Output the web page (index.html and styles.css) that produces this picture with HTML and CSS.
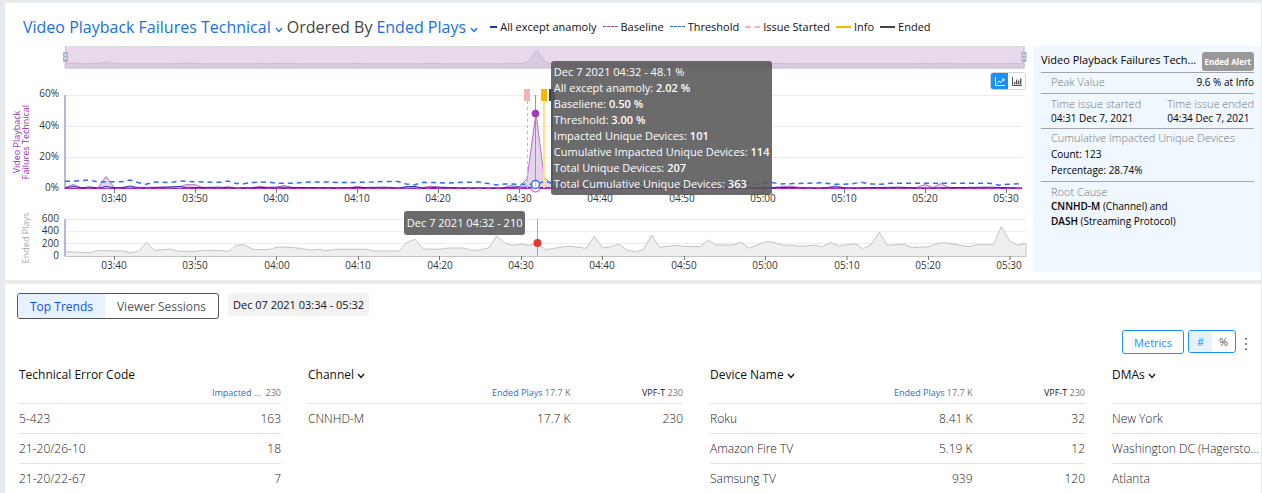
FILE: index.html
```
<!DOCTYPE html>
<html lang="en">
<head>
    <meta charset="UTF-8">
    <meta name="viewport" content="width=device-width, initial-scale=1.0">
    <title>Video Playback Failures Technical</title>
    <link rel="stylesheet" href="styles.css">
</head>
<body>
    <section class="card">
        <header class="card-header">
            <h1 class="title">
                <button class="title-select">Video Playback Failures Technical <svg class="chevron" viewBox="0 0 8 6"><path d="M1 1l3 3.5L7 1"/></svg></button>
                <span>Ordered By</span>
                <button class="title-select">Ended Plays <svg class="chevron" viewBox="0 0 8 6"><path d="M1 1l3 3.5L7 1"/></svg></button>
            </h1>
            <ul class="legend">
                <li><i class="swatch swatch-all"></i>All except anamoly</li>
                <li><i class="swatch swatch-baseline"></i>Baseline</li>
                <li><i class="swatch swatch-threshold"></i>Threshold</li>
                <li><i class="swatch swatch-started"></i>Issue Started</li>
                <li><i class="swatch swatch-info"></i>Info</li>
                <li><i class="swatch swatch-ended"></i>Ended</li>
            </ul>
        </header>

        <div class="overview">
            <div class="charts">
                <svg class="chart-svg" viewBox="5 46 1028 226">
                    <!-- range slider -->
                    <rect x="65" y="46" width="960" height="22" fill="#e8daec"/>
                    <path class="range-area" d="M65 63.5L75 63 82 63.7 99 63.5 105 62 112 63.2 120 63.8 170 63.8 182 63.2 196 63.2 203 63.8 254 63.8 260 63.3 267 63.8 286 63.2 300 63.8 350 63.8 357 63.3 364 63.8 420 63.8 432 63.3 444 63.8 500 63.8 513 63.2 520 63.7 528 62 536.500 50 545 62 552 63.7 700 63.8 780 63.5 800 63.8 912 63.8 926 63.2 934 63.8 944 63.2 952 63.8 1024 63.5V68H65Z"/>
                    <path d="M65 46.500H1024M65 68.500H1024" stroke="#dcdce0"/>
                    <path d="M65.500 46V68M1024 46V68" stroke="#b9c5d8"/>
                    <path d="M63 52h5v10h-5zM1021.500 52h5v10h-5z" fill="#a7b7cf"/>
                    <path d="M64 55h3M64 58.500h3M1022.500 55h3M1022.500 58.500h3" stroke="#eef2f8"/>

                    <!-- failures chart -->
                    <path class="gridline" d="M66 95.500H1022M66 126.500H1022M66 157.500H1022"/>
                    <path d="M65 95V189" stroke="#b0bdd6" stroke-width="2"/>
                    <g class="axis-label" text-anchor="end">
                        <text x="59" y="97">60%</text>
                        <text x="59" y="129">40%</text>
                        <text x="59" y="160">20%</text>
                        <text x="59" y="191">0%</text>
                    </g>
                    <path class="failures" d="M65 187.500L73 184.500 81 187.500 98 187.500 106 176.500 114 187.500 178 187 186 184.700 195 184.700 203 187.700 222 187.700 228 186.700 236 187.700 252 187.700 260 186.200 268 187.700 276 187.500 284 185.500 293 187.700 349 187.700 357 186.300 365 187.700 422 187.700 431 186 441 187.500 503 187.700 511 185.500 519 187 527 179 536 113 544 177 553 186 562 187.700 770 187.700 790 186 800 187.700 827 187.700 835 186 844 187.700 917 187.500 925 184.500 933 187.500 941 183.500 949 187.500 1022 188V188.500H65Z"/>
                    <path d="M65 188.500H1022" stroke="#8b25b5"/>
                    <path d="M65 188L73 186.500 81 187.700 90 187 98 188 106 186.500 114 187.700 122 187.700 130 186 138 187.700 146 188 170 187 179 186.500 187 187.700 220 187.200 236 188 276 187.200 300 187.500 340 187.800 385 187.200 398 188 406 186.700 415 186.500 423 188 440 187.200 460 188 500 188 519 187 536 187.500 560 188 700 188 710 187 730 188 790 187.500 820 188 835 187 850 188 900 187.200 920 188 960 187.500 990 187.200 1022 188" fill="none" stroke="#14389d"/>
                    <path d="M66 188.500H1022" stroke="#d42ee0" stroke-dasharray="5 5"/>
                    <path d="M65 181.300L74 181.200 89 180 98 182 106 181.700 122 181.700 130 180 138 182.500 146 184.300 154 182 171 182.500 179 181 195 181.700 219 182.300 228 181 236 183.500 244 183.700 252 182.500 268 182 276 183.300 293 183.200 309 182 325 182 341 182.500 365 182.300 382 181.500 398 181.500 406 184 415 184.800 423 182.300 440 182.700 448 183 464 182.300 480 182 488 183.500 496 185 504 184 520 184.200 536 184.200 544 181.500 553 183 600 184 660 183 700 182.500 745 182.500 756 184.300 770 182.200 780 184 822 182.800 835 184.300 850 184 861 182.300 871 184 881 184.300 890 183.300 990 183.300 999 185.200 1008 184.300 1022 183.700" fill="none" stroke="#2f6bff" stroke-width="1.500" stroke-dasharray="5 4"/>
                    <path class="tick" d="M114.500 189v4M195.500 189v4M276.500 189v4M357.500 189v4M438.500 189v4M519.500 189v4M600.500 189v4M682 189v4M763 189v4M844.500 189v4M925.500 189v4M1006.500 189v4"/>
                    <g class="axis-label" text-anchor="middle">
                        <text x="114" y="202">03:40</text>
                        <text x="195" y="202">03:50</text>
                        <text x="276" y="202">04:00</text>
                        <text x="357" y="202">04:10</text>
                        <text x="438" y="202">04:20</text>
                        <text x="519" y="202">04:30</text>
                        <text x="600" y="202">04:40</text>
                        <text x="682" y="202">04:50</text>
                        <text x="763" y="202">05:00</text>
                        <text x="844" y="202">05:10</text>
                        <text x="925" y="202">05:20</text>
                        <text x="1006" y="202">05:30</text>
                    </g>
                    <path d="M527.500 101V188" stroke="#eda5b5" stroke-dasharray="3 3"/>
                    <path d="M544 101V188" stroke="#ffe08a" stroke-width="2"/>
                    <path d="M552 101V188" stroke="#777" stroke-width="2"/>
                    <rect x="524" y="89" width="6" height="12" fill="#f2b1bb"/>
                    <rect x="541" y="89" width="6" height="12" fill="#ffb400"/>
                    <rect x="549" y="89" width="6" height="12" fill="#444"/>
                    <path d="M535.500 95V188" stroke="#999"/>
                    <circle cx="535.500" cy="113.500" r="3.800" fill="#a138b5"/>
                    <circle cx="535.500" cy="188" r="4" fill="#fff" stroke="#e04af0" stroke-width="1.200"/>
                    <circle cx="535.500" cy="184.500" r="4" fill="#fff" stroke="#2f6bff" stroke-width="1.400"/>
                    <path d="M535.500 182V187" stroke="#b5c4e8"/>
                    <g class="axis-title" text-anchor="middle">
                        <text transform="translate(20 142) rotate(-90)" fill="#9c2fb0">Video Playback</text>
                        <text transform="translate(29 142) rotate(-90)" fill="#9c2fb0">Failures Technical</text>
                        <text transform="translate(29 238) rotate(-90)" fill="#a8a8a8">Ended Plays</text>
                    </g>

                    <!-- ended plays chart -->
                    <path class="gridline" d="M66 219.500H1026M66 231.500H1026M66 243.500H1026"/>
                    <path class="plays" d="M65 251.700L90 252.700 98 250.500 123 251 130.500 252.700 138.500 251.300 146.500 242.700 154.500 250.300 171 249 178.500 251.300 196 251.300 203.500 250.300 220 250.500 228.500 251.300 236.500 245.300 244.500 244.700 252.500 249.300 268.500 249.700 276.500 247.300 285 247 300 248.300 309.500 250 318.500 249.300 326 250.700 335 249.300 366.500 249.300 374 251 399 251 406.500 242.700 415 239.300 423.500 249 440 249.300 448 248 464 248 471.500 250.300 480 250 489 247.700 496.700 236 504.500 242.700 511.700 245.300 520.700 244.300 530 245.300 537.300 243 545.700 249.700 561.700 247 570 246.300 586 248.300 594.300 236.300 602.700 248 610.700 246.700 619 244 627.300 250.300 635.300 251.700 643.300 249.700 651.700 235 659.300 247.300 676 245.300 683.300 246.300 700 246.700 708.300 240 716 245 732.300 245 741 242.300 749 248.300 757.700 244.700 765.700 241.700 772.300 242 781.700 245 793 245.300 799.300 246.300 815 245.300 822.300 246.700 830.700 242.300 838.700 246 855 243.700 863.300 248.700 871.300 244.700 879.300 232 887.300 245.300 904 244.300 912.300 247.700 928.300 246.700 936.700 243.700 944.300 242.700 969 246.700 976.700 244.700 993.300 244.700 1001.300 226.700 1009.700 241 1017.700 245.300 1026 243.300V256.500H65Z"/>
                    <path d="M65 219V256" stroke="#b0bdd6" stroke-width="2"/>
                    <g class="axis-label" text-anchor="end">
                        <text x="59" y="222">600</text>
                        <text x="59" y="234">400</text>
                        <text x="59" y="247">200</text>
                        <text x="59" y="259">0</text>
                    </g>
                    <path class="tick" d="M114.500 256v4M195.500 256v4M276.500 256v4M358.500 256v4M439.500 256v4M521.500 256v4M602.500 256v4M684.500 256v4M765.500 256v4M847 256v4M928.500 256v4M1010 256v4"/>
                    <g class="axis-label" text-anchor="middle">
                        <text x="114" y="269">03:40</text>
                        <text x="195" y="269">03:50</text>
                        <text x="277" y="269">04:00</text>
                        <text x="358" y="269">04:10</text>
                        <text x="440" y="269">04:20</text>
                        <text x="521" y="269">04:30</text>
                        <text x="602" y="269">04:40</text>
                        <text x="684" y="269">04:50</text>
                        <text x="765" y="269">05:00</text>
                        <text x="847" y="269">05:10</text>
                        <text x="928" y="269">05:20</text>
                        <text x="1009" y="269">05:30</text>
                    </g>
                    <path d="M537.500 219V256" stroke="#aaa"/>
                    <circle cx="537.500" cy="243" r="4" fill="#dc3a34"/>
                </svg>

                <div class="tooltip tooltip-failures">
                    <p>Dec 7 2021 04:32 - 48.1 %</p>
                    <p>All except anamoly: <b>2.02 %</b></p>
                    <p>Baseliene: <b>0.50 %</b></p>
                    <p>Threshold: <b>3.00 %</b></p>
                    <p>Impacted Unique Devices: <b>101</b></p>
                    <p>Cumulative Impacted Unique Devices: <b>114</b></p>
                    <p>Total Unique Devices: <b>207</b></p>
                    <p>Total Cumulative Unique Devices: <b>363</b></p>
                </div>
                <div class="tooltip tooltip-plays">Dec 7 2021 04:32 - 210</div>

                <div class="chart-type">
                    <button class="active" aria-label="Line chart"><svg viewBox="0 0 10 9"><path d="M.5 0v8.500H10M2 6.500l2-2.500 2 1.500L9 2M7 2h2v2"/></svg></button>
                    <button aria-label="Bar chart"><svg viewBox="0 0 10 9"><path d="M.5 0v8.500H10"/><path d="M2.700 7.500V5M4.700 7.500V2.500M6.700 7.500V3.800M8.700 7.500V1.500" stroke-width="1.400"/></svg></button>
                </div>
            </div>

            <aside class="alert">
                <div class="alert-head">
                    <h2>Video Playback Failures Tech...</h2>
                    <span class="badge">Ended Alert</span>
                </div>
                <div class="alert-row alert-split alert-loose">
                    <span class="label">Peak Value</span>
                    <span>9.6 % at Info</span>
                </div>
                <div class="alert-row alert-split">
                    <div><p class="label">Time issue started</p><p>04:31 Dec 7, 2021</p></div>
                    <div><p class="label">Time issue ended</p><p>04:34 Dec 7, 2021</p></div>
                </div>
                <div class="alert-row alert-loose">
                    <p class="label">Cumulative Impacted Unique Devices</p>
                    <p>Count: 123</p>
                    <p>Percentage: 28.74%</p>
                </div>
                <div class="alert-row">
                    <p class="label">Root Cause</p>
                    <p><b>CNNHD-M</b> (Channel) and</p>
                    <p><b>DASH</b> (Streaming Protocol)</p>
                </div>
            </aside>
        </div>
    </section>

    <section class="card trends">
        <div class="trends-bar">
            <div class="tabs">
                <button class="active">Top Trends</button>
                <button>Viewer Sessions</button>
            </div>
            <span class="date-range">Dec 07 2021 03:34 - 05:32</span>
        </div>

        <div class="toolbar">
            <button class="btn-metrics">Metrics</button>
            <div class="unit">
                <button class="active">#</button>
                <button>%</button>
            </div>
            <button class="btn-more" aria-label="More"><i></i><i></i><i></i></button>
        </div>

        <div class="tables">
            <div class="panel">
                <h3>Technical Error Code</h3>
                <table>
                    <thead>
                        <tr><th></th><th class="wide"><a href="#">Impacted ...</a> &nbsp;230</th></tr>
                    </thead>
                    <tbody>
                        <tr><td>5-423</td><td>163</td></tr>
                        <tr><td>21-20/26-10</td><td>18</td></tr>
                        <tr><td>21-20/22-67</td><td>7</td></tr>
                    </tbody>
                </table>
            </div>
            <div class="panel">
                <h3><button>Channel <svg class="chevron" viewBox="0 0 8 6"><path d="M1 1l3 3.500L7 1"/></svg></button></h3>
                <table>
                    <thead>
                        <tr><th></th><th class="wide"><a href="#">Ended Plays</a> 17.7 K</th><th class="wide"><b>VPF-T</b> 230</th></tr>
                    </thead>
                    <tbody>
                        <tr><td>CNNHD-M</td><td>17.7 K</td><td>230</td></tr>
                    </tbody>
                </table>
            </div>
            <div class="panel">
                <h3><button>Device Name <svg class="chevron" viewBox="0 0 8 6"><path d="M1 1l3 3.500L7 1"/></svg></button></h3>
                <table>
                    <thead>
                        <tr><th></th><th class="wide"><a href="#">Ended Plays</a> 17.7 K</th><th class="wide"><b>VPF-T</b> 230</th></tr>
                    </thead>
                    <tbody>
                        <tr><td>Roku</td><td>8.41 K</td><td>32</td></tr>
                        <tr><td>Amazon Fire TV</td><td>5.19 K</td><td>12</td></tr>
                        <tr><td>Samsung TV</td><td>939</td><td>120</td></tr>
                    </tbody>
                </table>
            </div>
            <div class="panel">
                <h3><button>DMAs <svg class="chevron" viewBox="0 0 8 6"><path d="M1 1l3 3.500L7 1"/></svg></button></h3>
                <table>
                    <thead>
                        <tr><th></th></tr>
                    </thead>
                    <tbody>
                        <tr><td>New York</td></tr>
                        <tr><td>Washington DC (Hagersto...</td></tr>
                        <tr><td>Atlanta</td></tr>
                    </tbody>
                </table>
            </div>
        </div>
    </section>
</body>
</html>
```
FILE: styles.css
```
* {
    margin: 0;
    padding: 0;
    box-sizing: border-box;
}

body {
    font-family: "Open Sans", "Noto Sans", sans-serif;
    font-size: 11px;
    color: #111;
    background: #e8ebee;
    padding: 3px 1px 0 5px;
    min-height: 100vh;
    display: flex;
    flex-direction: column;
    gap: 4px;
}

button {
    font: inherit;
    color: inherit;
    background: none;
    border: none;
    cursor: pointer;
}

.card {
    background: #fff;
}

.card-header {
    display: flex;
    align-items: center;
    gap: 12px;
    height: 43px;
    padding: 4px 18px 0;
}

.title {
    display: flex;
    gap: 4px;
    font-size: 16px;
    font-weight: 400;
    line-height: 20px;
    color: #444;
    white-space: nowrap;
}

.title-select {
    color: #1a6fdc;
}

.chevron {
    width: 8px;
    height: 6px;
    fill: none;
    stroke: currentColor;
    stroke-width: 1.2;
}

.legend {
    display: flex;
    gap: 6px;
    list-style: none;
    white-space: nowrap;
}

.legend li {
    display: flex;
    align-items: center;
    gap: 3px;
    line-height: 16px;
}

.swatch {
    width: 15px;
    border-top: 2px solid;
}

.swatch-all {
    width: 7px;
    color: #14389d;
}

.swatch-baseline {
    border-top: 1px dashed #a03ab8;
}

.swatch-threshold {
    border-top: 1px dashed #2f6bd8;
}

.swatch-started {
    border-top-style: dashed;
    color: #f2b1bb;
}

.swatch-info {
    color: #ffb400;
}

.swatch-ended {
    color: #444;
}

.overview {
    display: grid;
    grid-template-columns: 1fr 228px;
    padding-bottom: 8px;
}

.charts {
    position: relative;
}

.chart-svg {
    display: block;
    width: 100%;
}

.range-area {
    fill: #d9cbdf;
    stroke: #c9bcd2;
}

.gridline {
    stroke: #ececec;
    fill: none;
}

.tick {
    stroke: #777;
}

.axis-label {
    font-size: 10px;
    fill: #333;
}

.axis-title {
    font-size: 9px;
}

.failures {
    fill: #e6d3ec;
    stroke: #b672c6;
}

.plays {
    fill: #efefef;
    stroke: #c4c4c4;
}

.tooltip {
    position: absolute;
    color: #fff;
    background: rgba(85, 85, 85, 0.87);
    border-radius: 3px;
    padding: 3px;
    line-height: 16px;
    white-space: nowrap;
}

.tooltip b {
    font-weight: 600;
}

.tooltip-failures {
    top: 15px;
    left: 53.1%;
}

.tooltip-plays {
    top: 165px;
    left: 38.8%;
    padding: 4px 3px;
}

.chart-type {
    position: absolute;
    top: 26px;
    right: 7px;
    display: flex;
    border: 1px solid #d4d4d4;
    border-radius: 3px;
    background: #fff;
    overflow: hidden;
}

.chart-type button {
    width: 17px;
    height: 16px;
    display: grid;
    place-items: center;
    color: #555;
}

.chart-type svg {
    width: 10px;
    height: 9px;
    fill: none;
    stroke: currentColor;
}

.chart-type .active {
    color: #fff;
    background: #1890ff;
}

.alert {
    background: #f0f7ff;
    padding: 6px 7px 0 8px;
    font-size: 10px;
    line-height: 15px;
    color: #000;
}

.alert-head {
    display: flex;
    justify-content: space-between;
    height: 20px;
}

.alert-head h2 {
    font-size: 11px;
    font-weight: 400;
}

.badge {
    height: 19px;
    padding: 0 3px;
    border-radius: 3px;
    color: #fff;
    background: #999;
    font-size: 8px;
    font-weight: 700;
    line-height: 19px;
}

.alert-row {
    border-top: 1px solid #a3a6b0;
    padding: 2px 0 2px 10px;
}

.alert-loose {
    padding: 1px 0 3px 10px;
    line-height: 16px;
}

.alert-split {
    display: flex;
    justify-content: space-between;
}

.alert .label {
    font-size: 11px;
    font-weight: 300;
    color: #777;
}

.alert b {
    font-weight: 600;
}

.trends {
    flex: 1;
    padding: 9px 0 0 12px;
}

.trends-bar {
    display: flex;
    align-items: flex-start;
    gap: 9px;
}

.tabs {
    display: flex;
    border: 1px solid #555;
    border-radius: 3px;
    font-size: 12px;
    color: #555;
    overflow: hidden;
}

.tabs button {
    height: 24px;
    padding: 0 12px;
}

.tabs .active {
    color: #0f4dff;
    background: #e6f2ff;
}

.date-range {
    padding: 0 5px;
    border-radius: 3px;
    background: #f2f2f2;
    line-height: 23px;
}

.toolbar {
    display: flex;
    justify-content: flex-end;
    gap: 4px;
    padding: 11px 10px 0 0;
}

.btn-metrics {
    width: 62px;
    height: 24px;
    border: 1px solid #1890ff;
    border-radius: 3px;
    color: #1890ff;
}

.unit {
    display: flex;
    height: 23px;
    border: 1px solid #1890ff;
    border-radius: 3px;
    color: #555;
    overflow: hidden;
}

.unit button {
    width: 23px;
}

.unit .active {
    color: #1890ff;
    background: #e6f2ff;
}

.btn-more {
    display: flex;
    flex-direction: column;
    align-items: center;
    gap: 3px;
    width: 11px;
    padding-top: 8px;
}

.btn-more i {
    width: 2px;
    height: 2px;
    background: #888;
}

.tables {
    display: grid;
    grid-template-columns: 262fr 375fr 375fr 149fr;
    gap: 27px;
    padding: 12px 0 0 2px;
}

.panel {
    min-width: 0;
}

.panel h3 {
    font-size: 12px;
    font-weight: 400;
    line-height: 18px;
}

.panel table {
    width: 100%;
    table-layout: fixed;
    border-collapse: collapse;
}

.panel th,
.panel td {
    text-align: right;
    white-space: nowrap;
}

.panel th {
    height: 19px;
    border-bottom: 1px solid #e2e2e2;
    font-size: 9px;
    font-weight: 400;
    line-height: 18px;
    color: #777;
}

.panel th.wide {
    width: 30%;
}

.panel th.wide:nth-child(2):last-child {
    width: 50%;
}

.panel th a {
    color: #1a6fdc;
    text-decoration: none;
}

.panel th b {
    font-weight: 400;
    color: #222;
}

.panel td {
    height: 30px;
    font-size: 12px;
    font-weight: 300;
    color: #222;
}

.panel tr + tr td {
    border-top: 1px solid #e2e2e2;
}

.panel th:first-child,
.panel td:first-child {
    text-align: left;
}
```
